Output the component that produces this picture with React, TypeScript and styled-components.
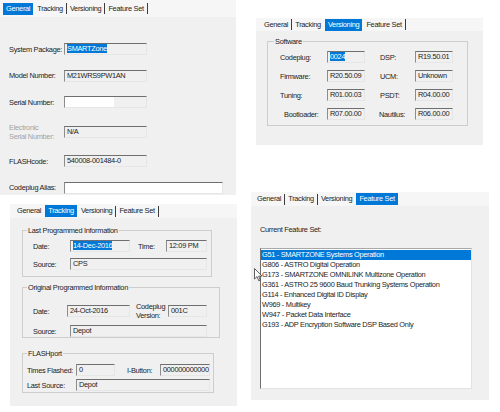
import React from "react";
import styled, { createGlobalStyle } from "styled-components";

const GlobalStyle = createGlobalStyle`
  html, body {
    margin: 0;
    padding: 0;
    background: #ffffff;
  }
  body {
    font-family: "Liberation Sans", Arial, sans-serif;
    font-size: 7.4px;
    letter-spacing: -0.3px;
    color: #1c1c1c;
  }
`;

const Page = styled.div`
  width: 500px;
  height: 412px;
  display: grid;
  grid-template-columns: 250px 250px;
  overflow: hidden;
`;

const Column = styled.div<{ $top?: number }>`
  display: flex;
  flex-direction: column;
  align-items: flex-start;
  padding-top: ${(p) => p.$top ?? 0}px;
`;

const Panel = styled.div<{ $w: number; $h: number; $left?: number; $top?: number }>`
  position: relative;
  width: ${(p) => p.$w}px;
  height: ${(p) => p.$h}px;
  margin-left: ${(p) => p.$left ?? 0}px;
  margin-top: ${(p) => p.$top ?? 0}px;
  background: #f0f0f0;
  display: flex;
  flex-direction: column;
`;

const TabStrip = styled.div<{ $h: number; $pad: number }>`
  height: ${(p) => p.$h}px;
  padding-left: ${(p) => p.$pad}px;
  display: flex;
  align-items: center;
  background: #f6f6f6;
  flex-shrink: 0;
`;

const Tab = styled.div<{ $active: boolean }>`
  height: 12px;
  line-height: 12px;
  padding: 0 3px;
  background: ${(p) => (p.$active ? "#0078d7" : "transparent")};
  color: ${(p) => (p.$active ? "#ffffff" : "#1c1c1c")};
  white-space: nowrap;
`;

const TabSep = styled.span<{ $show: boolean }>`
  width: 1px;
  height: 11px;
  background: ${(p) => (p.$show ? "#3c3c3c" : "transparent")};
`;

const TAB_NAMES = ["General", "Tracking", "Versioning", "Feature Set"];

const Tabs: React.FC<{ active: number; h: number; pad: number }> = ({ active, h, pad }) => (
  <TabStrip $h={h} $pad={pad}>
    {TAB_NAMES.map((name, i) => (
      <React.Fragment key={name}>
        <Tab $active={i === active}>{name}</Tab>
        <TabSep $show={i !== active && i + 1 !== active} />
      </React.Fragment>
    ))}
  </TabStrip>
);

const Field = styled.div<{ $w: number; $bg?: string }>`
  box-sizing: border-box;
  width: ${(p) => p.$w}px;
  height: 12px;
  flex-shrink: 0;
  border-top: 1px solid #6f6f6f;
  border-left: 1px solid #8c8c8c;
  border-right: 1px solid #e6e6e6;
  border-bottom: 1px solid #e6e6e6;
  background: ${(p) => p.$bg ?? "#f0f0f0"};
  padding-left: 2px;
  line-height: 10px;
  white-space: nowrap;
  overflow: hidden;
`;

const Sel = styled.span`
  background: #0078d7;
  color: #ffffff;
`;

const Label = styled.div<{ $w: number; $muted?: boolean; $indent?: number }>`
  width: ${(p) => p.$w}px;
  flex-shrink: 0;
  box-sizing: border-box;
  padding-left: ${(p) => p.$indent ?? 0}px;
  line-height: 9px;
  color: ${(p) => (p.$muted ? "#a3a3a3" : "#1c1c1c")};
  white-space: nowrap;
`;

const Row = styled.div<{ $gap?: number }>`
  display: flex;
  align-items: center;
  margin-top: ${(p) => p.$gap ?? 0}px;
`;

const Spacer = styled.div<{ $w: number }>`
  width: ${(p) => p.$w}px;
  flex-shrink: 0;
`;

/* General tab */
const GeneralBody = styled.div`
  display: flex;
  flex-direction: column;
  gap: 14.5px;
  padding: 26px 0 0 9px;
`;

/* group box */
const Group = styled.div<{ $w: number; $h: number; $pad: string; $mt?: number }>`
  box-sizing: border-box;
  width: ${(p) => p.$w}px;
  height: ${(p) => p.$h}px;
  margin-top: ${(p) => p.$mt ?? 0}px;
  border: 1px solid #cdcdcd;
  padding: ${(p) => p.$pad};
  display: flex;
  flex-direction: column;
`;

const Legend = styled.div`
  align-self: flex-start;
  margin: -5px 0 0 -6px;
  padding: 0 1px;
  line-height: 9px;
  background: #f0f0f0;
  white-space: nowrap;
`;

/* Versioning tab */
const VersionBody = styled.div`
  padding: 10px 0 0 11px;
`;

const VersionGrid = styled.div`
  display: grid;
  grid-template-columns: 47px 38px 50px 38px;
  row-gap: 7px;
  align-items: center;
  margin-top: 5px;
`;

/* Tracking tab */
const TrackBody = styled.div`
  display: flex;
  flex-direction: column;
  padding: 12px 0 0 12px;
`;

const GroupLegend = styled(Legend)<{ $left?: number }>`
  margin-left: ${(p) => -(p.$left ?? 6)}px;
`;

/* Feature set tab */
const FeatureBody = styled.div`
  padding-left: 9px;
`;

const Caption = styled.div`
  margin-top: 19px;
  line-height: 10px;
`;

const ListBox = styled.div`
  box-sizing: border-box;
  width: 212px;
  height: 141px;
  margin-top: 13px;
  background: #ffffff;
  border-top: 1px solid #a8a8a8;
  border-left: 1px solid #6e6e6e;
  border-right: 1px solid #e2e2e2;
  border-bottom: 1px solid #e2e2e2;
  padding-top: 1px;
`;

const ListItem = styled.div<{ $sel?: boolean }>`
  height: 10px;
  line-height: 10px;
  padding-left: 1px;
  white-space: nowrap;
  background: ${(p) => (p.$sel ? "#0078d7" : "transparent")};
  color: ${(p) => (p.$sel ? "#ffffff" : "#1c1c1c")};
`;

const Cursor = styled.svg`
  position: absolute;
  left: 3px;
  top: 76px;
`;

const FEATURES = [
  "G51  - SMARTZONE Systems Operation",
  "G806 - ASTRO Digital Operation",
  "G173 - SMARTZONE OMNILINK Multizone Operation",
  "G361 - ASTRO 25 9600 Baud Trunking Systems Operation",
  "G114 - Enhanced Digital ID Display",
  "W969 - Multikey",
  "W947 - Packet Data Interface",
  "G193 - ADP Encryption Software DSP Based Only",
];

const App: React.FC = () => {
  return (
    <>
      <GlobalStyle />
      <Page>
        <Column>
          <Panel $w={236} $h={195}>
            <Tabs active={0} h={17} pad={3} />
            <GeneralBody>
              <Row>
                <Label $w={55}>System Package:</Label>
                <Field $w={83}>
                  <Sel>SMARTZone</Sel>
                </Field>
              </Row>
              <Row>
                <Label $w={55}>Model Number:</Label>
                <Field $w={83}>M21WRS9PW1AN</Field>
              </Row>
              <Row>
                <Label $w={55}>Serial Number:</Label>
                <Field $w={83} $bg="linear-gradient(to right, #ffffff 60%, #f0f0f0 60%)" />
              </Row>
              <Row>
                <Label $w={55} $muted>
                  Electronic
                  <br />
                  Serial Number:
                </Label>
                <Field $w={83}>N/A</Field>
              </Row>
              <Row>
                <Label $w={55}>FLASHcode:</Label>
                <Field $w={83}>540008-001484-0</Field>
              </Row>
              <Row>
                <Label $w={55}>Codeplug Alias:</Label>
                <Field $w={159} $bg="#ffffff" />
              </Row>
            </GeneralBody>
          </Panel>

          <Panel $w={227} $h={202} $left={10} $top={9}>
            <Tabs active={1} h={14} pad={4} />
            <TrackBody>
              <Group $w={190} $h={47} $pad="0 0 0 10px">
                <GroupLegend $left={6}>Last Programmed Information</GroupLegend>
                <Row $gap={5}>
                  <Label $w={37}>Date:</Label>
                  <Field $w={60}>
                    <Sel>14-Dec-2016</Sel>
                  </Field>
                  <Spacer $w={8} />
                  <Label $w={28}>Time:</Label>
                  <Field $w={41}>12:09 PM</Field>
                </Row>
                <Row $gap={6}>
                  <Label $w={37}>Source:</Label>
                  <Field $w={137}>CPS</Field>
                </Row>
              </Group>

              <Group $w={198} $h={51} $pad="0 0 0 10px" $mt={10}>
                <GroupLegend $left={6}>Original Programmed Information</GroupLegend>
                <Row $gap={10}>
                  <Label $w={34}>Date:</Label>
                  <Field $w={63}>24-Oct-2016</Field>
                  <Spacer $w={6} />
                  <Label $w={32}>
                    Codeplug
                    <br />
                    Version:
                  </Label>
                  <Field $w={39}>001C</Field>
                </Row>
                <Row $gap={5}>
                  <Label $w={37}>Source:</Label>
                  <Field $w={137}>Depot</Field>
                </Row>
              </Group>

              <Group $w={192} $h={40} $pad="0 0 0 4px" $mt={15}>
                <GroupLegend $left={0}>FLASHport</GroupLegend>
                <Row $gap={6}>
                  <Label $w={49}>Times Flashed:</Label>
                  <Field $w={39}>0</Field>
                  <Spacer $w={12} />
                  <Label $w={33}>I-Button:</Label>
                  <Field $w={50}>000000000000</Field>
                </Row>
                <Row $gap={3}>
                  <Label $w={49}>Last Source:</Label>
                  <Field $w={134}>Depot</Field>
                </Row>
              </Group>
            </TrackBody>
          </Panel>
        </Column>

        <Column $top={18}>
          <Panel $w={227} $h={127} $left={6}>
            <Tabs active={2} h={13} pad={5} />
            <VersionBody>
              <Group $w={201} $h={85} $pad="0 0 0 12px">
                <Legend>Software</Legend>
                <VersionGrid>
                  <Label $w={47}>Codeplug:</Label>
                  <Field $w={38}>
                    <Sel>0024</Sel>
                  </Field>
                  <Label $w={50} $indent={15}>DSP:</Label>
                  <Field $w={38}>R19.50.01</Field>

                  <Label $w={47}>Firmware:</Label>
                  <Field $w={38}>R20.50.09</Field>
                  <Label $w={50} $indent={15}>UCM:</Label>
                  <Field $w={38}>Unknown</Field>

                  <Label $w={47}>Tuning:</Label>
                  <Field $w={38}>R01.00.03</Field>
                  <Label $w={50} $indent={15}>PSDT:</Label>
                  <Field $w={38}>R04.00.00</Field>

                  <Label $w={47} $indent={4}>Bootloader:</Label>
                  <Field $w={38}>R07.00.00</Field>
                  <Label $w={50} $indent={14}>Nautilus:</Label>
                  <Field $w={38}>R06.00.00</Field>
                </VersionGrid>
              </Group>
            </VersionBody>
          </Panel>

          <Panel $w={238} $h={208} $left={1} $top={47}>
            <Tabs active={3} h={14} pad={3} />
            <FeatureBody>
              <Caption>Current Feature Set:</Caption>
              <ListBox>
                {FEATURES.map((f, i) => (
                  <ListItem key={f} $sel={i === 0}>
                    {f}
                  </ListItem>
                ))}
              </ListBox>
            </FeatureBody>
            <Cursor width="9" height="14" viewBox="0 0 9 14">
              <path
                d="M0.5 0.5 L0.5 11 L3 8.6 L4.8 12.8 L6.3 12.1 L4.6 8.1 L8 8.1 Z"
                fill="#ffffff"
                stroke="#3a3a3a"
                strokeWidth="0.8"
                strokeLinejoin="round"
              />
            </Cursor>
          </Panel>
        </Column>
      </Page>
    </>
  );
};

export default App;
